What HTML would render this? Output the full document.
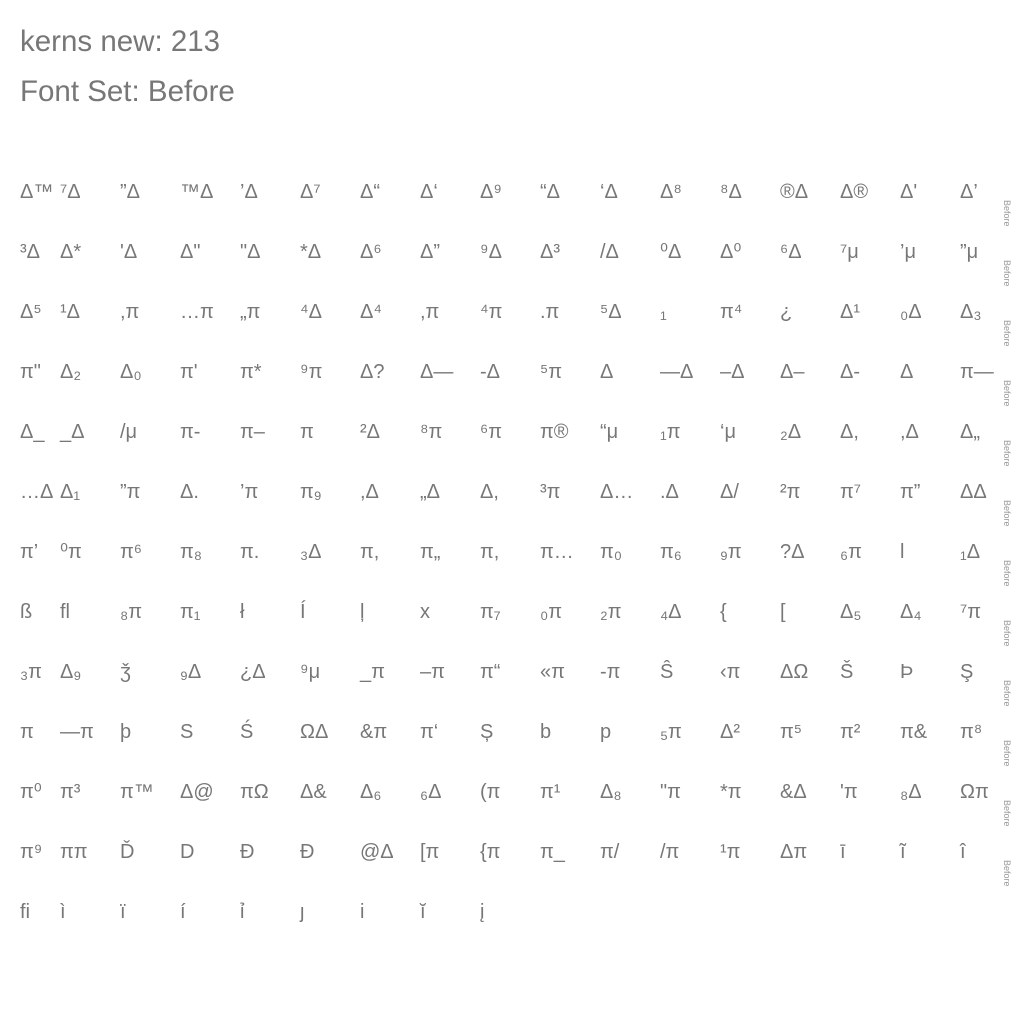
<!DOCTYPE html>
<html><head><meta charset="utf-8"><style>
body{margin:0;width:1024px;height:1020px;background:#fff;font-family:"Liberation Sans","DejaVu Sans",sans-serif;overflow:hidden;position:relative}
.h{position:absolute;left:20px;font-size:29.5px;color:#777;line-height:30px}
.r{position:absolute;left:0;height:30px;width:1024px}
.r span{position:absolute;top:0;font-size:20px;line-height:30px;color:#777;font-weight:normal;white-space:nowrap}
.b{position:absolute;font-size:9px;color:#999;transform:rotate(90deg);transform-origin:left top;line-height:10px;left:1012px}
</style></head><body>
<div class="h" style="top:27px">kerns new: 213</div>
<div class="h" style="top:77px">Font Set: Before</div>
<div id="g"></div>
<script>
var rows=[
["Δ™","⁷Δ","”Δ","™Δ","’Δ","Δ⁷","Δ“","Δ‘","Δ⁹","“Δ","‘Δ","Δ⁸","⁸Δ","®Δ","Δ®","Δ'","Δ’"],
["³Δ","Δ*","'Δ","Δ\"","\"Δ","*Δ","Δ⁶","Δ”","⁹Δ","Δ³","/Δ","⁰Δ","Δ⁰","⁶Δ","⁷μ","’μ","”μ"],
["Δ⁵","¹Δ",",π","…π","„π","⁴Δ","Δ⁴",",π","⁴π",".π","⁵Δ","₁","π⁴","¿","Δ¹","₀Δ","Δ₃"],
["π\"","Δ₂","Δ₀","π'","π*","⁹π","Δ?","Δ—","-Δ","⁵π","Δ","—Δ","–Δ","Δ–","Δ-","Δ","π—"],
["Δ_","_Δ","/μ","π-","π–","π","²Δ","⁸π","⁶π","π®","“μ","₁π","‘μ","₂Δ","Δ,",",Δ","Δ„"],
["…Δ","Δ₁","”π","Δ.","’π","π₉",",Δ","„Δ","Δ,","³π","Δ…",".Δ","Δ/","²π","π⁷","π”","ΔΔ"],
["π’","⁰π","π⁶","π₈","π.","₃Δ","π,","π„","π,","π…","π₀","π₆","₉π","?Δ","₆π","l","₁Δ"],
["ß","fl","₈π","π₁","ł","Í","ļ","x","π₇","₀π","₂π","₄Δ","{","[","Δ₅","Δ₄","⁷π"],
["₃π","Δ₉","ǯ","₉Δ","¿Δ","⁹μ","_π","–π","π“","«π","-π","Ŝ","‹π","ΔΩ","Š","Þ","Ş"],
["π","—π","þ","S","Ś","ΩΔ","&π","π‘","Ș","b","p","₅π","Δ²","π⁵","π²","π&","π⁸"],
["π⁰","π³","π™","Δ@","πΩ","Δ&","Δ₆","₆Δ","(π","π¹","Δ₈","\"π","*π","&Δ","'π","₈Δ","Ωπ"],
["π⁹","ππ","Ď","D","Đ","Đ","@Δ","[π","{π","π_","π/","/π","¹π","Δπ","ī","ĩ","î"],
["ﬁ","ì","ï","í","ỉ","ȷ","i","ĭ","į"]];
var xs=[20,60,120,180,240,300,360,420,480,540,600,660,720,780,840,900,960];
var h="";
rows.forEach(function(r,i){var t=177+i*60;h+='<div class="r" style="top:'+t+'px">';
r.forEach(function(c,j){h+='<span style="left:'+xs[j]+'px">'+c.replace(/&/g,"&amp;").replace(/</g,"&lt;")+'</span>';});
h+='</div>';if(i<12)h+='<div class="b" style="top:'+(200+i*60)+'px">Before</div>';});
document.getElementById("g").innerHTML=h;
</script>
</body></html>
